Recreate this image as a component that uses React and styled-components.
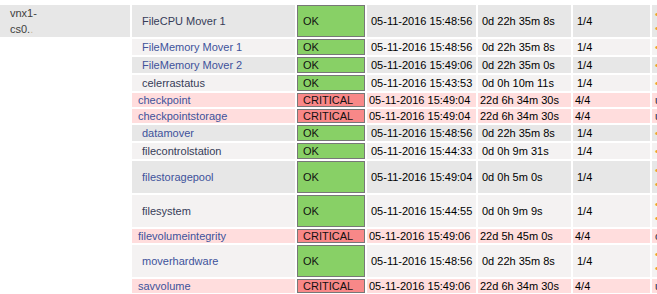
import styled, { createGlobalStyle } from "styled-components";

const GlobalStyle = createGlobalStyle`
  html, body {
    margin: 0;
    padding: 0;
    background: #ffffff;
    overflow: hidden;
  }
  body {
    font-family: "Liberation Sans", Arial, sans-serif;
    font-size: 11px;
    color: #000;
  }
`;

const services = [
  { name: "FileCPU Mover 1", ok: true, last: "05-11-2016 15:48:56", dur: "0d 22h 35m 8s", att: "1/4", tone: "even", dark: true, tall: true },
  { name: "FileMemory Mover 1", ok: true, last: "05-11-2016 15:48:56", dur: "0d 22h 35m 8s", att: "1/4", tone: "odd" },
  { name: "FileMemory Mover 2", ok: true, last: "05-11-2016 15:49:06", dur: "0d 22h 35m 0s", att: "1/4", tone: "even" },
  { name: "celerrastatus", ok: true, last: "05-11-2016 15:43:53", dur: "0d 0h 10m 11s", att: "1/4", tone: "odd", dark: true },
  { name: "checkpoint", ok: false, last: "05-11-2016 15:49:04", dur: "22d 6h 34m 30s", att: "4/4", info: "unable" },
  { name: "checkpointstorage", ok: false, last: "05-11-2016 15:49:04", dur: "22d 6h 34m 30s", att: "4/4", info: "unable" },
  { name: "datamover", ok: true, last: "05-11-2016 15:48:56", dur: "0d 22h 35m 8s", att: "1/4", tone: "even" },
  { name: "filecontrolstation", ok: true, last: "05-11-2016 15:44:33", dur: "0d 0h 9m 31s", att: "1/4", tone: "odd", dark: true },
  { name: "filestoragepool", ok: true, last: "05-11-2016 15:49:04", dur: "0d 0h 5m 0s", att: "1/4", tone: "even", tall: true },
  { name: "filesystem", ok: true, last: "05-11-2016 15:44:55", dur: "0d 0h 9m 9s", att: "1/4", tone: "odd", dark: true, tall: true },
  { name: "filevolumeintegrity", ok: false, last: "05-11-2016 15:49:06", dur: "22d 5h 45m 0s", att: "4/4", info: "check" },
  { name: "moverhardware", ok: true, last: "05-11-2016 15:48:56", dur: "0d 22h 35m 8s", att: "1/4", tone: "odd", tall: true },
  { name: "savvolume", ok: false, last: "05-11-2016 15:49:06", dur: "22d 6h 34m 30s", att: "4/4", info: "unable" },
];

const toneBg = {
  even: "#e7e7e7",
  odd: "#f4f2f2",
  crit: "#ffdddd",
};

const Page = styled.div`
  width: 100%;
  overflow: hidden;
  padding-top: 5px;
`;

const Rows = styled.div`
  display: flex;
  flex-direction: column;
  gap: 2px;
  width: 860px;
`;

const Row = styled.div`
  display: grid;
  grid-template-columns: 130px 163px 68px 109px 93px 77px 200px;
  column-gap: 2px;
  height: ${(p) => p.$h}px;
`;

const Cell = styled.div`
  display: flex;
  align-items: center;
  box-sizing: border-box;
  white-space: nowrap;
  overflow: hidden;
  background: ${(p) => (p.$bg ? toneBg[p.$bg] : "transparent")};
  padding-left: ${(p) => p.$pad || 0}px;
`;

const HostCell = styled(Cell)`
  flex-direction: column;
  align-items: flex-start;
  justify-content: center;
  color: #404040;
  line-height: 16px;
`;

const Faint = styled.span`
  color: #c9b9a0;
`;

const ServiceLink = styled.span`
  color: ${(p) => (p.$dark ? "#363c58" : "#40529b")};
`;

const Status = styled(Cell)`
  border: 1px solid #777777;
  padding-left: 5px;
  background: ${(p) => (p.$ok ? "#88d066" : "#f88888")};
  color: #111;
`;

const InfoCell = styled(Cell)`
  flex-direction: column;
  align-items: flex-start;
  justify-content: center;
  line-height: 14px;
  padding-left: 3px;
  color: ${(p) => (p.$ok ? "#f0a030" : "#2a2a40")};
`;

function ServiceRow({ s, first }) {
  const tone = s.ok ? s.tone : "crit";
  const pad = s.ok ? 4 : 2;
  const h = s.tall ? 32 : s.ok ? 16 : 14;
  return (
    <Row $h={h}>
      {first ? (
        <HostCell $bg="even" $pad={10}>
          <span>vnx1-</span>
          <span>
            cs0.<Faint>.</Faint>
          </span>
        </HostCell>
      ) : (
        <Cell />
      )}
      <Cell $bg={tone} $pad={s.ok ? 10 : 6}>
        <ServiceLink $dark={s.dark}>{s.name}</ServiceLink>
      </Cell>
      <Status $ok={s.ok}>{s.ok ? "OK" : "CRITICAL"}</Status>
      <Cell $bg={tone} $pad={pad}>{s.last}</Cell>
      <Cell $bg={tone} $pad={pad}>{s.dur}</Cell>
      <Cell $bg={tone} $pad={pad}>{s.att}</Cell>
      <InfoCell $bg={tone} $ok={s.ok}>
        {s.ok ? (
          s.tall ? (
            <>
              <span>• OK</span>
              <span>• OK</span>
            </>
          ) : (
            <span>• OK</span>
          )
        ) : (
          <span>{s.info}</span>
        )}
      </InfoCell>
    </Row>
  );
}

export default function App() {
  return (
    <>
      <GlobalStyle />
      <Page>
        <Rows>
          {services.map((s, i) => (
            <ServiceRow key={s.name} s={s} first={i === 0} />
          ))}
        </Rows>
      </Page>
    </>
  );
}
